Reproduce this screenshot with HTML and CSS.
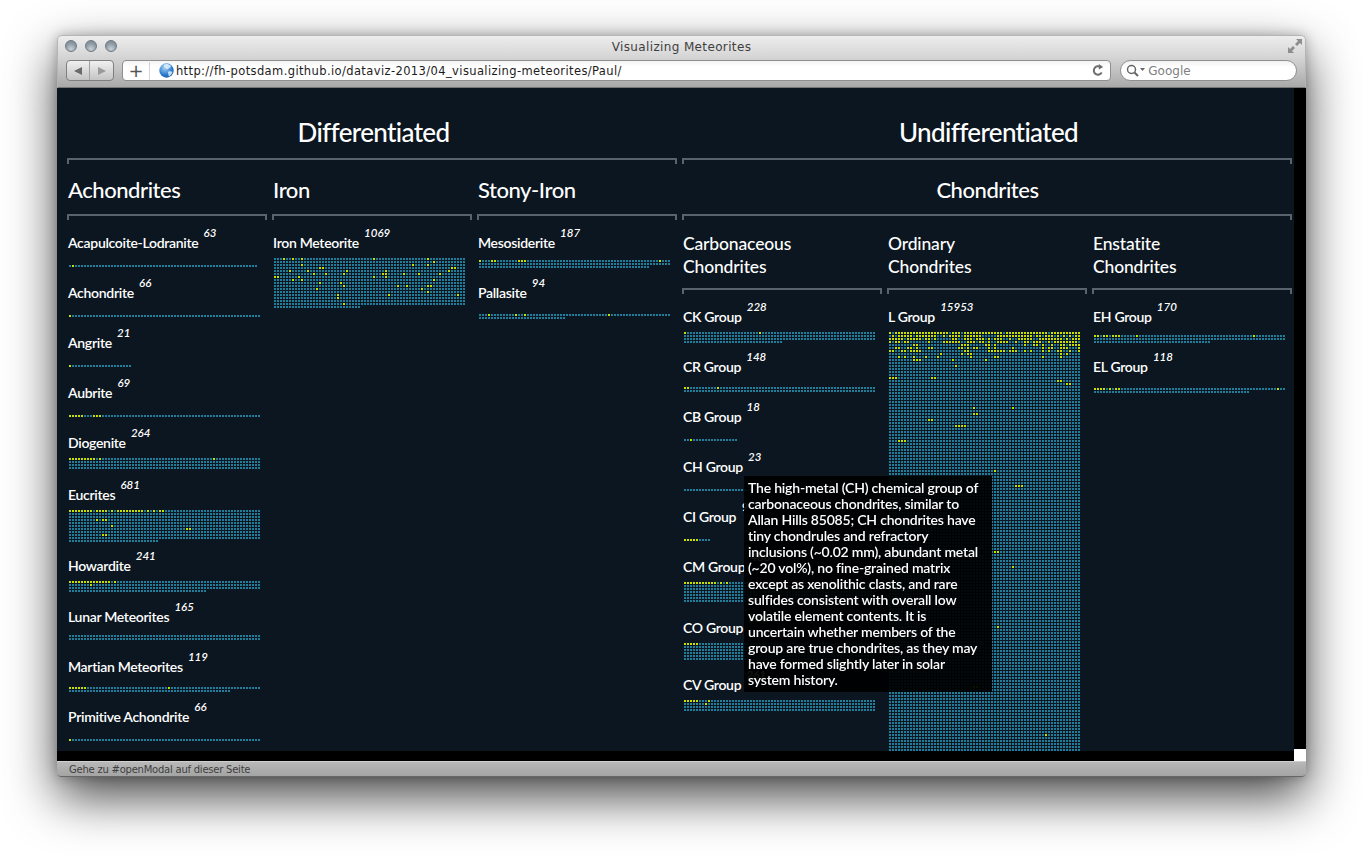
FILE: index.html
```html
<!DOCTYPE html>
<html lang="en">
<head>
    <meta charset="UTF-8">
    <title>Visualizing Meteorites</title>
    <link rel="stylesheet" href="styles.css">
</head>
<body>
    <div class="window">
        <header class="chrome">
            <div class="titlebar">
                <div class="lights"><i></i><i></i><i></i></div>
                <span class="title">Visualizing Meteorites</span>
                <svg class="expand" width="14" height="14" viewBox="0 0 14 14">
                    <path d="M8 0h6v6l-2-2-3 3-2-2 3-3z M0 14V8l2 2 3-3 2 2-3 3 2 2z" fill="#8e8e8e"/>
                </svg>
            </div>
            <div class="toolbar">
                <div class="nav">
                    <button class="nav-btn"><svg width="10" height="10" viewBox="0 0 10 10"><path d="M9 1v8L1 5z" fill="#6a6a6a"/></svg></button>
                    <button class="nav-btn"><svg width="10" height="10" viewBox="0 0 10 10"><path d="M1 1v8l8-4z" fill="#9a9a9a"/></svg></button>
                </div>
                <div class="address">
                    <span class="plus">+</span>
                    <svg class="globe" width="15" height="15" viewBox="0 0 15 15">
                        <defs>
                            <radialGradient id="sea" cx="0.4" cy="0.3" r="0.8">
                                <stop offset="0" stop-color="#a9d4f5"/>
                                <stop offset="0.6" stop-color="#2f7fd0"/>
                                <stop offset="1" stop-color="#0f4c9c"/>
                            </radialGradient>
                        </defs>
                        <circle cx="7.5" cy="7.5" r="7.2" fill="url(#sea)"/>
                        <path d="M5 1.5c2-1 5-.6 6.5 1 .8 1 .2 2-1 2.2-1 .2-1 1.500-2.200 1.500S7 4.800 6 4.500 4 2.300 5 1.500zM9.500 8.500c1.200-.4 3.200-.4 4 .3-.4 2-1.800 3.800-3.500 4.600-.8-.8-.2-2-.8-3-.4-.8-.4-1.600.3-1.900z" fill="#dff0fb" opacity="0.85"/>
                    </svg>
                    <span class="url">http://fh-potsdam.github.io/dataviz-2013/04_visualizing-meteorites/Paul/</span>
                    <svg class="reload" width="12" height="13" viewBox="0 0 12 13">
                        <path d="M9.700 8.500A4.200 4.200 0 1 1 8.400 3" fill="none" stroke="#6d6d6d" stroke-width="2"/>
                        <path d="M6.800 0l4.400 3-4.400 2.600z" fill="#6d6d6d"/>
                    </svg>
                </div>
                <div class="search">
                    <svg width="20" height="13" viewBox="0 0 20 13">
                        <circle cx="5.500" cy="5.500" r="4" fill="none" stroke="#666" stroke-width="1.500"/>
                        <path d="M8.500 8.500L12 12" stroke="#666" stroke-width="2"/>
                        <path d="M14 4h5l-2.500 3z" fill="#666"/>
                    </svg>
                    <span>Google</span>
                </div>
            </div>
        </header>

        <div class="viewport">
            <div class="main">
                <main class="page">
                    <section class="kingdom">
                        <h1>Differentiated</h1>
                        <div class="bracket"></div>
                        <div class="groups">
                            <div class="group">
                                <h2>Achondrites</h2>
                                <div class="bracket bracket-h2"></div>
                                <ul class="items">
                                    <li class="item"><p class="label">Acapulcoite-Lodranite <em>63</em></p><div class="dots"><canvas data-count="63" data-yellow="0:1"></canvas></div></li>
                                    <li class="item"><p class="label">Achondrite <em>66</em></p><div class="dots"><canvas data-count="64" data-yellow="0:0"></canvas></div></li>
                                    <li class="item"><p class="label">Angrite <em>21</em></p><div class="dots"><canvas data-count="21" data-yellow="0:0"></canvas></div></li>
                                    <li class="item"><p class="label">Aubrite <em>69</em></p><div class="dots"><canvas data-count="64" data-yellow="0:0-4 0:8-10"></canvas></div></li>
                                    <li class="item"><p class="label">Diogenite <em>264</em></p><div class="dots"><canvas data-count="256" data-yellow="0:0-8 0:10 0:48"></canvas></div></li>
                                    <li class="item tight-2"><p class="label">Eucrites <em>681</em></p><div class="dots"><canvas data-count="670" data-yellow="0:0-7 0:9-12 0:14 0:16-24 0:26 0:28 0:30-31 3:9 3:11-12 5:14 6:39-40 8:11-12"></canvas></div></li>
                                    <li class="item tight-1"><p class="label">Howardite <em>241</em></p><div class="dots"><canvas data-count="238" data-yellow="0:0-13 0:15 1:7"></canvas></div></li>
                                    <li class="item"><p class="label">Lunar Meteorites <em>165</em></p><div class="dots high-1"><canvas data-count="128"></canvas></div></li>
                                    <li class="item"><p class="label">Martian Meteorites <em>119</em></p><div class="dots low-1"><canvas data-count="118" data-yellow="0:0-5 0:33"></canvas></div></li>
                                    <li class="item"><p class="label">Primitive Achondrite <em>66</em></p><div class="dots"><canvas data-count="64" data-yellow="0:0"></canvas></div></li>
                                </ul>
                            </div>
                            <div class="group">
                                <h2>Iron</h2>
                                <div class="bracket bracket-h2"></div>
                                <ul class="items">
                                    <li class="item"><p class="label">Iron Meteorite <em>1069</em></p><div class="dots"><canvas data-count="1053" data-yellow="0:3 0:6 0:9 0:33 0:51 1:53 2:9 2:46 2:51 3:15-16 3:59-60 4:5 4:11 4:24 4:37 4:58 5:13 5:17 5:23 5:36-37 5:43 5:48 5:55 6:0-1 6:8 6:33 6:37 7:6 7:9 7:53 8:15 8:22 9:23 9:41 9:44 9:51-52 10:14 10:49 11:51 12:21 12:38 12:61 13:21 15:23"></canvas></div></li>
                                </ul>
                            </div>
                            <div class="group">
                                <h2>Stony-Iron</h2>
                                <div class="bracket bracket-h2"></div>
                                <ul class="items">
                                    <li class="item"><p class="label">Mesosiderite <em>187</em></p><div class="dots low-1"><canvas data-count="185" data-yellow="0:0 0:4-5 0:13-15 0:60"></canvas></div></li>
                                    <li class="item"><p class="label">Pallasite <em>94</em></p><div class="dots low-2"><canvas data-count="93" data-yellow="0:3 0:12 0:15 0:43"></canvas></div></li>
                                </ul>
                            </div>
                        </div>
                    </section>

                    <section class="kingdom">
                        <h1>Undifferentiated</h1>
                        <div class="bracket"></div>
                        <h2 class="centered">Chondrites</h2>
                        <div class="bracket bracket-h2"></div>
                        <div class="groups">
                            <div class="group">
                                <h3>Carbonaceous<br>Chondrites</h3>
                                <div class="bracket"></div>
                                <ul class="items">
                                    <li class="item tight-2"><p class="label">CK Group <em>228</em></p><div class="dots"><canvas data-count="225" data-yellow="0:0 0:25"></canvas></div></li>
                                    <li class="item"><p class="label">CR Group <em>148</em></p><div class="dots low-1"><canvas data-count="128" data-yellow="0:0-1 0:11"></canvas></div></li>
                                    <li class="item"><p class="label">CB Group <em>18</em></p><div class="dots"><canvas data-count="18" data-yellow="0:2"></canvas></div></li>
                                    <li class="item"><p class="label">CH Group <em>23</em></p><div class="dots"><canvas data-count="23"></canvas></div></li>
                                    <li class="item"><p class="label">CI Group <em>9</em></p><div class="dots"><canvas data-count="9" data-yellow="0:0-4"></canvas></div></li>
                                    <li class="item"><p class="label">CM Group <em>486</em></p><div class="dots"><canvas data-count="448" data-yellow="0:0-10 0:12 0:14"></canvas></div></li>
                                    <li class="item tight-1"><p class="label">CO Group <em>388</em></p><div class="dots"><canvas data-count="384" data-yellow="0:0-4"></canvas></div></li>
                                    <li class="item"><p class="label">CV Group <em>261</em></p><div class="dots"><canvas data-count="256" data-yellow="0:0-4 0:8 1:7"></canvas></div></li>
                                </ul>
                            </div>
                            <div class="group">
                                <h3>Ordinary<br>Chondrites</h3>
                                <div class="bracket"></div>
                                <ul class="items">
                                    <li class="item"><p class="label">L Group <em>15953</em></p><div class="dots"><canvas data-count="15953" data-speckle="0.92 0.78 0.72 0.5 0.42 0.36 0.36 0.2 0.14" data-yellow="9:8-10 9:21 9:32 11:22 15:0-2 15:14-15 16:56-57 17:59-60 25:28 25:41 27:28-29 29:13-14 31:22-25 36:3-5 46:35 51:42-44 73:35-36 78:41 98:36 118:28-29 134:52"></canvas></div></li>
                                </ul>
                            </div>
                            <div class="group">
                                <h3>Enstatite<br>Chondrites</h3>
                                <div class="bracket"></div>
                                <ul class="items">
                                    <li class="item"><p class="label">EH Group <em>170</em></p><div class="dots low-2"><canvas data-count="167" data-yellow="0:0-1 0:3-4 0:6-8 0:14 0:53"></canvas></div></li>
                                    <li class="item"><p class="label">EL Group <em>118</em></p><div class="dots low-2"><canvas data-count="116" data-yellow="0:0-3 0:5 0:7-8 0:61"></canvas></div></li>
                                </ul>
                            </div>
                        </div>
                    </section>

                    <div class="tooltip">The high-metal (CH) chemical group of<br>carbonaceous chondrites, similar to<br>Allan Hills 85085; CH chondrites have<br>tiny chondrules and refractory<br>inclusions (~0.02 mm), abundant metal<br>(~20 vol%), no fine-grained matrix<br>except as xenolithic clasts, and rare<br>sulfides consistent with overall low<br>volatile element contents. It is<br>uncertain whether members of the<br>group are true chondrites, as they may<br>have formed slightly later in solar<br>system history.</div>
                </main>
                <div class="page-end"></div>
            </div>
            <div class="scrollbar"><div class="scroll-corner"></div></div>
        </div>

        <footer class="status">Gehe zu #openModal auf dieser Seite</footer>
    </div>
    <script src="main.js"></script>
</body>
</html>
```

FILE: styles.css
```css
* {
    box-sizing: border-box;
}

body {
    margin: 0;
    height: 856px;
    overflow: hidden;
    padding: 35px 0 0 57px;
    background-color: #fff;
    font-family: 'Lato', sans-serif;
    font-variant-ligatures: none;
}

/* browser window */
.window {
    width: 1249px;
    height: 742px;
    display: flex;
    flex-direction: column;
    border-radius: 5px 5px 4px 4px;
    box-shadow: 0 20px 50px rgba(0, 0, 0, 0.72), 0 0 12px rgba(0, 0, 0, 0.25);
}

.chrome {
    height: 53px;
    flex: none;
    border-radius: 5px 5px 0 0;
    border: 1px solid #b5b5b5;
    border-bottom: 1px solid #777;
    background: linear-gradient(#ededed, #d6d6d6 40%, #a9a9a9);
    font-family: 'DejaVu Sans', sans-serif;
}

.titlebar {
    height: 23px;
    display: flex;
    align-items: center;
    justify-content: center;
    position: relative;
}

.lights {
    position: absolute;
    left: 7px;
    top: 4px;
    display: flex;
    gap: 8px;
}

.lights i {
    width: 12px;
    height: 12px;
    border-radius: 50%;
    border: 1px solid #6f7880;
    background: radial-gradient(circle at 50% 80%, #c6d0d8, #8b99a4 60%, #7a8791);
}

.title {
    font-size: 12px;
    letter-spacing: 0.36px;
    color: #3f3f3f;
    margin-top: -1px;
}

.expand {
    position: absolute;
    right: 3px;
    top: 3px;
}

.toolbar {
    display: flex;
    align-items: center;
    padding: 1px 8px 0 8px;
}

.nav {
    width: 48px;
    height: 21px;
    display: flex;
    border: 1px solid #7f7f7f;
    border-radius: 4px;
    background: linear-gradient(#f0f0f0, #c4c4c4);
    margin-right: 8px;
}

.nav-btn {
    flex: 1;
    padding: 0;
    border: 0;
    background: none;
    display: flex;
    align-items: center;
    justify-content: center;
}

.nav-btn + .nav-btn {
    border-left: 1px solid #a0a0a0;
}

.address {
    width: 991px;
    height: 21px;
    display: flex;
    align-items: center;
    border: 1px solid #8f8f8f;
    border-radius: 4px;
    background: linear-gradient(#f4f4f4, #fff 30%);
    margin-right: 9px;
}

.plus {
    width: 27px;
    font-size: 18px;
    line-height: 18px;
    color: #555;
    text-align: center;
    border-right: 1px solid #d4d4d4;
    margin-right: 9px;
}

.globe {
    flex: none;
    margin-right: 2px;
}

.url {
    flex: 1;
    font-size: 11.5px;
    letter-spacing: 0.39px;
    color: #1c1c1c;
    white-space: nowrap;
}

.reload {
    margin-right: 6px;
}

.search {
    width: 177px;
    height: 21px;
    display: flex;
    align-items: center;
    gap: 2px;
    padding-left: 5px;
    border: 1px solid #8f8f8f;
    border-radius: 11px;
    background: linear-gradient(#f2f2f2, #fff 35%);
    font-size: 12px;
    color: #808080;
}

.viewport {
    height: 673px;
    flex: none;
    display: flex;
    background-color: #000;
}

.main {
    width: 1237px;
    display: flex;
    flex-direction: column;
}

.page-end {
    height: 10px;
    flex: none;
    background-color: #000;
}

.scrollbar {
    flex: 1;
    display: flex;
    flex-direction: column;
    justify-content: flex-end;
    background-color: #000;
}

.scroll-corner {
    height: 12px;
    background-color: #fff;
}

.status {
    height: 16px;
    flex: none;
    padding: 1px 0 0 12px;
    border-top: 1px solid #d0d0d0;
    border-bottom: 1px solid #666;
    border-radius: 0 0 4px 4px;
    background: linear-gradient(#b8b8b8, #a4a4a4);
    font-family: 'DejaVu Sans', sans-serif;
    font-size: 10px;
    letter-spacing: -0.23px;
    line-height: 13px;
    color: #3e3e3e;
}

/* the page itself */
.page {
    height: 663px;
    flex: none;
    position: relative;
    overflow: hidden;
    display: flex;
    gap: 5px;
    padding-left: 10px;
    background-color: #0b1620;
    color: #fff;
}

.kingdom {
    width: 610px;
    flex: none;
}

h1 {
    margin: 0 0 8px;
    padding: 26px 0 0 3px;
    font-size: 26px;
    letter-spacing: -0.65px;
    line-height: 36px;
    font-weight: 500;
    text-align: center;
}

h2 {
    margin: 0 0 9px;
    padding: 11px 0 0 1px;
    font-size: 22px;
    letter-spacing: -0.45px;
    line-height: 30px;
    font-weight: 500;
}

h2.centered {
    text-align: center;
}

h3 {
    margin: 0 0 10px;
    padding: 12px 0 0 1px;
    font-size: 17.5px;
    letter-spacing: -0.15px;
    line-height: 23px;
    font-weight: 500;
}

.bracket {
    height: 6px;
    border: 2px solid #59636c;
    border-bottom: 0;
}

.groups {
    display: flex;
    gap: 5px;
}

.group {
    width: 200px;
    flex: none;
}

.items {
    list-style: none;
    margin: 0;
    padding: 13px 0 0;
}

.item {
    margin-bottom: 13px;
}

.item.tight-1 {
    margin-bottom: 12px;
}

.item.tight-2 {
    margin-bottom: 11px;
}

.label {
    height: 20px;
    margin: 0 0 5px;
    padding-left: 1px;
    font-size: 14px;
    letter-spacing: -0.3px;
    line-height: 20px;
    font-weight: 600;
    white-space: nowrap;
}

.label em {
    margin-left: 2px;
    font-size: 11.5px;
    letter-spacing: 0;
    font-weight: 600;
    line-height: 0;
    vertical-align: 11px;
}

/* bars are bottom aligned; short ones sit 2px above the end of the box */
.dots {
    min-height: 12px;
    margin-left: 2px;
    padding-bottom: 2px;
    display: flex;
    align-items: flex-end;
}

.dots.low-1 {
    padding-bottom: 1px;
}

.dots.low-2 {
    padding-bottom: 0;
}

.dots.high-1 {
    padding-bottom: 3px;
}

canvas {
    display: block;
}

.tooltip {
    position: absolute;
    left: 687px;
    top: 388px;
    width: 248px;
    height: 216px;
    padding: 4px;
    background-color: rgba(0, 0, 0, 0.92);
    font-size: 14px;
    letter-spacing: -0.2px;
    line-height: 16px;
    font-weight: 600;
}
```

FILE: main.js
```js
// draws the meteorite dots: 64 per row, 2px squares on a 3px grid
const COLS = 64;
const BLUE = "#1f7e9c";
const YELLOW = "#c8e000";

// small seeded random so the picture is the same every time
let seed = 7;
function rand() {
    seed = (seed * 16807) % 2147483647;
    return seed / 2147483647;
}

function parseYellow(text) {
    const found = new Set();
    if (!text) return found;
    text.split(" ").forEach(function(part) {
        const [row, cols] = part.split(":");
        const [from, to] = cols.split("-").map(Number);
        for (let c = from; c <= (to || from); c++) {
            found.add(Number(row) * COLS + c);
        }
    });
    return found;
}

document.querySelectorAll("canvas").forEach(function(canvas) {
    const count = Number(canvas.dataset.count);
    const yellow = parseYellow(canvas.dataset.yellow);

    // L Group has a dense yellow band at the top
    if (canvas.dataset.speckle) {
        canvas.dataset.speckle.split(" ").forEach(function(density, row) {
            for (let c = 0; c < COLS; c++) {
                if (rand() < Number(density)) yellow.add(row * COLS + c);
            }
        });
    }

    canvas.width = COLS * 3;
    canvas.height = Math.ceil(count / COLS) * 3;
    const ctx = canvas.getContext("2d");
    for (let i = 0; i < count; i++) {
        ctx.fillStyle = yellow.has(i) ? YELLOW : BLUE;
        ctx.fillRect((i % COLS) * 3, Math.floor(i / COLS) * 3, 2, 2);
    }
});
```
